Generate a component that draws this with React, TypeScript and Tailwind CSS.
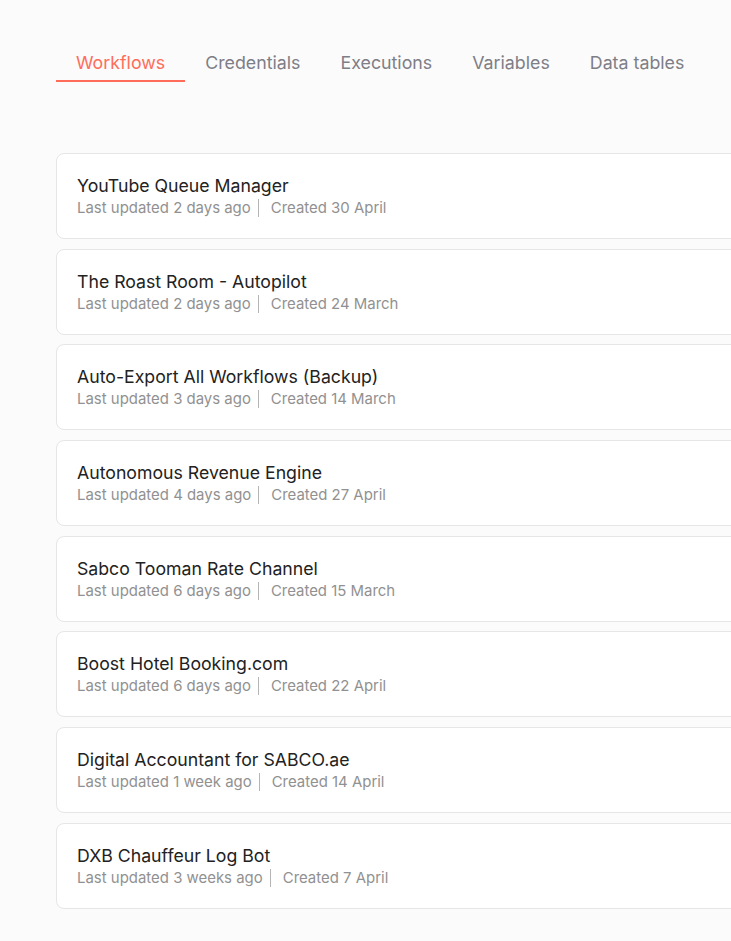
import React from "react";

const tabs = ["Workflows", "Credentials", "Executions", "Variables", "Data tables"];

const workflows = [
  { name: "YouTube Queue Manager", updated: "2 days ago", created: "30 April" },
  { name: "The Roast Room - Autopilot", updated: "2 days ago", created: "24 March" },
  { name: "Auto-Export All Workflows (Backup)", updated: "3 days ago", created: "14 March" },
  { name: "Autonomous Revenue Engine", updated: "4 days ago", created: "27 April" },
  { name: "Sabco Tooman Rate Channel", updated: "6 days ago", created: "15 March" },
  { name: "Boost Hotel Booking.com", updated: "6 days ago", created: "22 April" },
  { name: "Digital Accountant for SABCO.ae", updated: "1 week ago", created: "14 April" },
  { name: "DXB Chauffeur Log Bot", updated: "3 weeks ago", created: "7 April" },
];

export default function App() {
  return (
    <div
      className="w-[731px] h-[941px] overflow-hidden bg-[#fbfbfb]"
      style={{ fontFamily: "Inter, 'Noto Sans', sans-serif" }}
    >
      <div className="pl-[56px] pt-[44px]">
        <nav className="flex">
          {tabs.map((t, i) => (
            <div
              key={t}
              className={
                i === 0
                  ? "px-5 h-[38px] flex items-start pt-[7px] text-[17.8px] leading-[24px] text-[#ff6d5a] border-b-2 border-[#ff6d5a]"
                  : "px-5 h-[38px] flex items-start pt-[7px] text-[17.8px] leading-[24px] text-[#7e7e87] border-b-2 border-transparent"
              }
            >
              {t}
            </div>
          ))}
        </nav>

        <div className="mt-[71px] flex flex-col gap-[9.7px] w-[720px]">
          {workflows.map((w) => (
            <div
              key={w.name}
              className="h-[86px] bg-white border border-[#e6e6e6] rounded-[8px] px-5 pt-[20px]"
            >
              <div className="text-[17.7px] leading-[24px] text-[#222222]">{w.name}</div>
              <div className="flex items-center text-[14.95px] leading-[20px] text-[#919191]">
                <span>Last updated {w.updated}</span>
                <span className="ml-[7px] mr-[6px] w-px h-[18px] bg-[#b5b5b5]" />
                <span className="ml-[6px]">Created {w.created}</span>
              </div>
            </div>
          ))}
        </div>
      </div>
    </div>
  );
}
